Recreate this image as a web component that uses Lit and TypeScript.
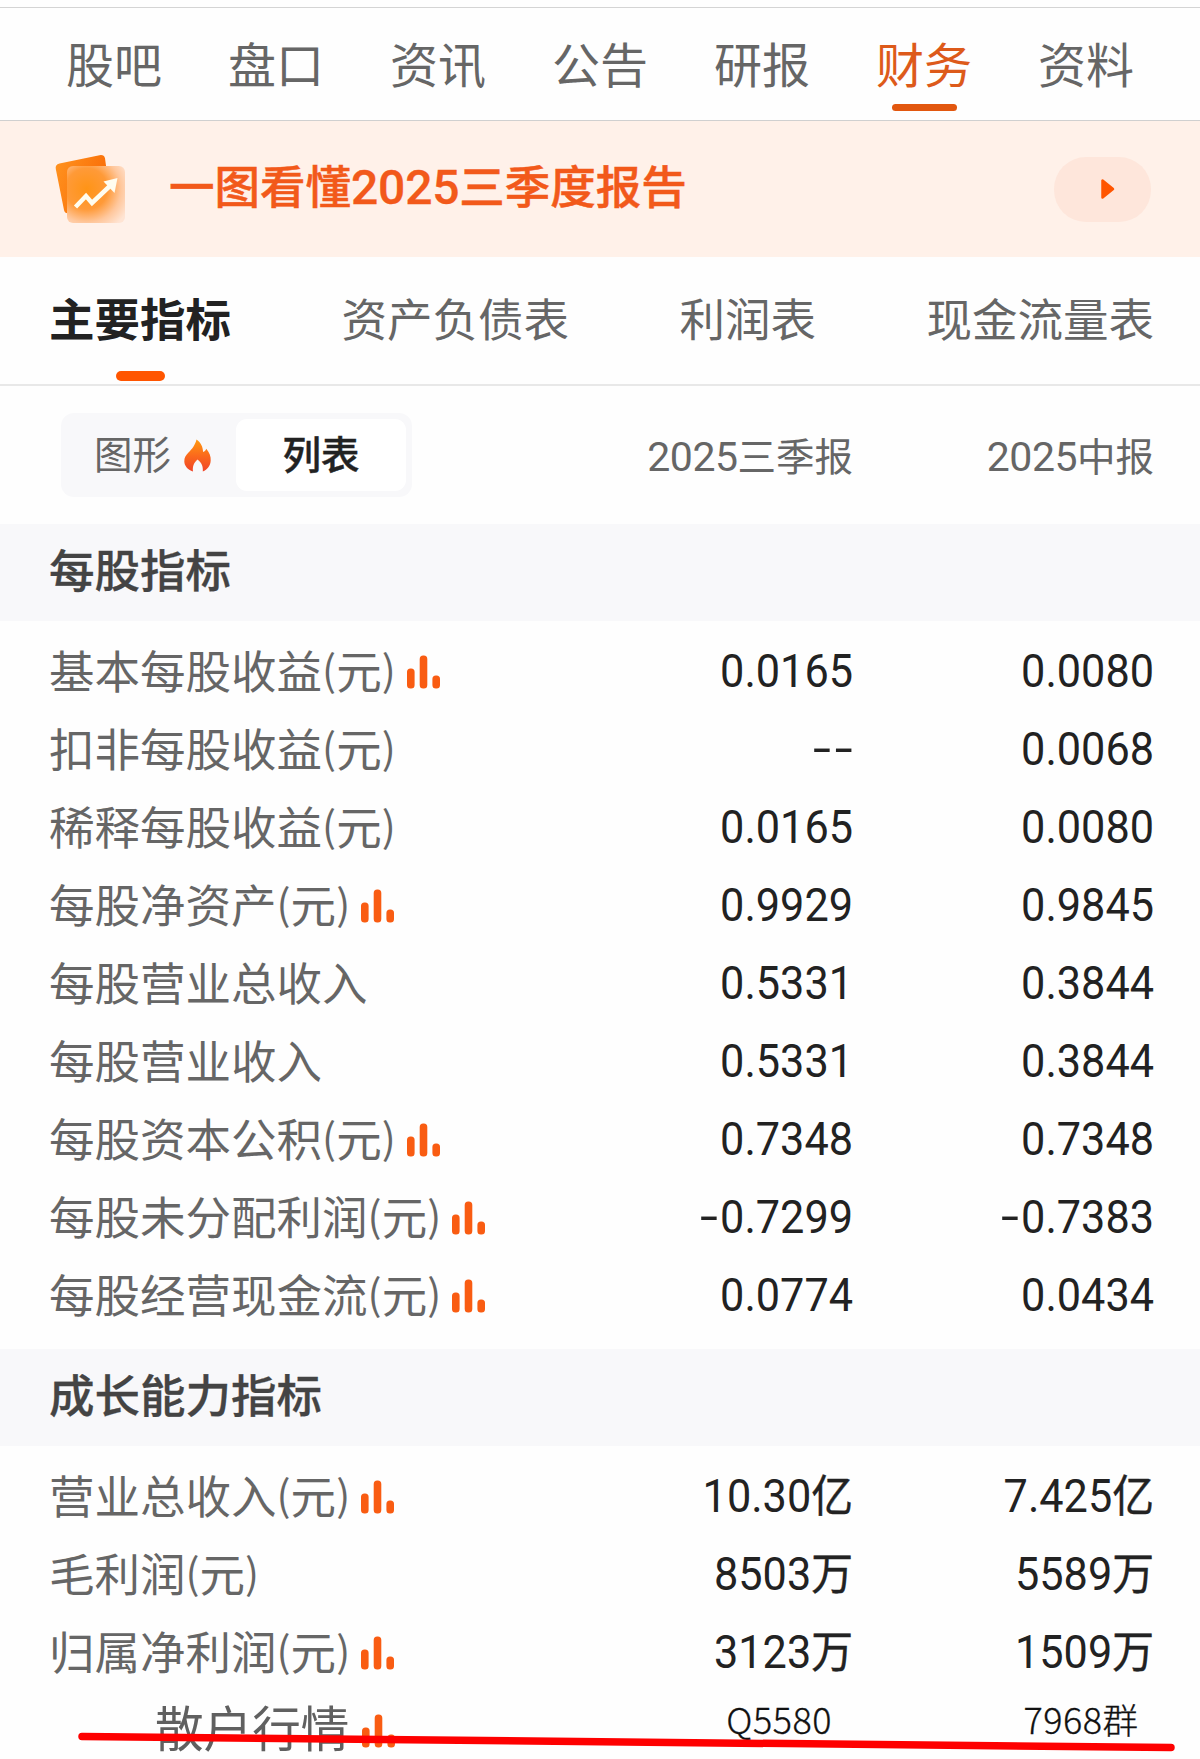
import { LitElement, html, svg, css } from "lit";
import { customElement, property } from "lit/decorators.js";

interface Metric {
  label: string;
  chart?: boolean;
  q3: string;
  h1: string;
}

const NAV = ["股吧", "盘口", "资讯", "公告", "研报", "财务", "资料"];
const TABS = ["主要指标", "资产负债表", "利润表", "现金流量表"];

const PER_SHARE: Metric[] = [
  { label: "基本每股收益(元)", chart: true, q3: "0.0165", h1: "0.0080" },
  { label: "扣非每股收益(元)", q3: "--", h1: "0.0068" },
  { label: "稀释每股收益(元)", q3: "0.0165", h1: "0.0080" },
  { label: "每股净资产(元)", chart: true, q3: "0.9929", h1: "0.9845" },
  { label: "每股营业总收入", q3: "0.5331", h1: "0.3844" },
  { label: "每股营业收入", q3: "0.5331", h1: "0.3844" },
  { label: "每股资本公积(元)", chart: true, q3: "0.7348", h1: "0.7348" },
  { label: "每股未分配利润(元)", chart: true, q3: "-0.7299", h1: "-0.7383" },
  { label: "每股经营现金流(元)", chart: true, q3: "0.0774", h1: "0.0434" },
];

const GROWTH: Metric[] = [
  { label: "营业总收入(元)", chart: true, q3: "10.30亿", h1: "7.425亿" },
  { label: "毛利润(元)", q3: "8503万", h1: "5589万" },
  { label: "归属净利润(元)", chart: true, q3: "3123万", h1: "1509万" },
];

@customElement("bar-icon")
class BarIcon extends LitElement {
  static styles = css`
    :host { display: block; width: 34px; height: 34px; flex: none; }
    svg { display: block; }
  `;
  render() {
    return html`<svg width="34" height="34" viewBox="0 0 34 34" fill="#f95c12">
      ${[[0, 13.5, 20], [12.7, 0.5, 33], [25.4, 20.5, 13]].map(
        ([x, y, h]) => svg`<rect x=${x} y=${y} width="7.6" height=${h} rx="3.5" />`
      )}
    </svg>`;
  }
}

@customElement("metric-row")
class MetricRow extends LitElement {
  @property({ attribute: false }) metric!: Metric;
  static styles = css`
    :host {
      display: grid;
      grid-template-columns: 500px 1fr 301px;
      height: 78px;
      line-height: 74px;
      padding: 0 46px 0 49px;
      box-sizing: border-box;
    }
    .label { display: flex; gap: 11px; font-size: 45.5px; color: #666; white-space: nowrap; }
    .paren { font-size: 41.5px; line-height: 1; vertical-align: 3px; }
    bar-icon { margin-top: 23px; }
    .value {
      font-family: Roboto, "Noto Sans CJK SC", sans-serif;
      font-size: 45.5px;
      text-align: right;
      color: #222;
      line-height: 80px;
      white-space: nowrap;
      transform: scaleX(0.95);
      transform-origin: right;
    }
    .unit { font-family: "Noto Sans CJK SC", sans-serif; font-size: 44px; line-height: 1; -webkit-text-stroke: 0.4px #222; }
    .dash { display: inline-block; transform: scaleX(1.5); margin-right: 6px; position: relative; top: -1px; }
    .dash + .dash { margin-left: 5px; margin-right: 3px; }
  `;
  private label(text: string) {
    return Array.from(text).map((c) => (/[()]/.test(c) ? html`<span class="paren">${c}</span>` : c));
  }
  private value(text: string) {
    return Array.from(text).map((c) =>
      c === "-"
        ? html`<span class="dash">-</span>`
        : /[亿万]/.test(c)
        ? html`<span class="unit">${c}</span>`
        : c
    );
  }
  render() {
    const m = this.metric;
    return html`
      <div class="label"><span>${this.label(m.label)}</span>${m.chart ? html`<bar-icon></bar-icon>` : null}</div>
      <div class="value">${this.value(m.q3)}</div>
      <div class="value">${this.value(m.h1)}</div>
    `;
  }
}

@customElement("app-root")
class AppRoot extends LitElement {
  static styles = css`
    :host {
      display: block;
      position: relative;
      height: 1759px;
      overflow: hidden;
      background: #fefefe;
      font-family: "Noto Sans CJK SC", sans-serif;
      color: #666;
    }
    * { box-sizing: border-box; }
    svg { display: block; }
    .nav {
      display: grid;
      grid-template-columns: repeat(7, 162px);
      justify-content: center;
      margin-top: 7px;
      height: 114px;
      border-top: 1px solid #d4d4d4;
      border-bottom: 1px solid #d0d0d0;
      font-size: 48px;
      line-height: 109px;
      text-align: center;
    }
    .nav .on { color: #dd5a1a; display: flex; flex-direction: column; align-items: center; }
    .nav .on::after { content: ""; width: 65px; height: 7px; border-radius: 4px; background: #e2570f; margin-top: -13px; }
    .banner {
      display: flex;
      align-items: center;
      height: 136px;
      background: #fff1e9;
      padding: 0 49px 0 53px;
    }
    .banner .title {
      margin-left: 40px;
      flex: 1;
      font-size: 45.5px;
      font-weight: 500;
      line-height: 60px;
      margin-top: -11px;
      color: #f2591a;
      -webkit-text-stroke: 0.5px #f2591a;
      white-space: nowrap;
    }
    .banner .year { font-family: Roboto, sans-serif; font-size: 48px; font-weight: 500; line-height: 1; -webkit-text-stroke: 0.3px #f2591a; letter-spacing: -0.2px; }
    .play {
      width: 97px; height: 65px; border-radius: 32px; background: #fee6db;
      display: flex; align-items: center; padding-left: 47px;
    }
    .tabs {
      display: flex;
      justify-content: space-between;
      height: 129px;
      padding: 0 46px 0 49px;
      border-bottom: 2px solid #e8e8e8;
      font-size: 45.5px;
      line-height: 120px;
    }
    .tabs .on { color: #222; font-weight: 700; display: flex; flex-direction: column; align-items: center; }
    .tabs .on::after { content: ""; width: 49px; height: 10px; border-radius: 5px; background: #ff5500; margin-top: -6px; }
    .period {
      display: grid;
      grid-template-columns: 351px 1fr 301px;
      height: 138px;
      padding: 0 46px 0 61px;
      font-size: 38.5px;
    }
    .toggle {
      display: flex; width: 351px; height: 84px; margin-top: 27px; padding: 6px;
      background: #f8f8fa; border-radius: 13px; line-height: 66px;
    }
    .graph { width: 169px; padding-left: 27px; display: flex; gap: 13px; }
    .graph svg { margin-top: 20px; }
    .list { width: 170px; height: 72px; background: #fff; border-radius: 11px; text-align: center; color: #222; font-weight: 500; -webkit-text-stroke: 0.4px #222; }
    .col { text-align: right; line-height: 137px; white-space: nowrap; }
    .col .year { font-family: Roboto, sans-serif; font-size: 41px; line-height: 1; font-weight: 400; letter-spacing: -0.5px; }
    .band {
      height: 97px; background: #f8f8fa; padding-left: 49px;
      font-size: 45.5px; font-weight: 500; line-height: 89px; color: #444;
      -webkit-text-stroke: 0.3px #444;
    }
    .rows { padding: 11px 0 15px; }
    .rows.growth { padding: 11px 0 0; }
    .last {
      display: grid;
      grid-template-columns: 568px 264px 1fr;
      padding: 0 62px 0 0;
      height: 67px;
      align-items: start;
      color: #111;
    }
    .last .name { display: flex; gap: 13px; padding-left: 155px; font-size: 48.6px; line-height: 71px; color: #606060; }
    .last bar-icon { margin-top: 23px; }
    .last .v { text-align: right; font-weight: 300; font-size: 35.5px; line-height: 55px; -webkit-text-stroke: 0.3px #111; }
    .last .code { font-size: 36px; letter-spacing: 0.5px; }
    .strike { position: absolute; left: 0; top: 1725px; }
  `;

  private document() {
    return html`<svg width="76" height="76" viewBox="0 0 76 76">
      <defs>
        <linearGradient id="back" x1="0" y1="0" x2="1" y2="0.4">
          <stop offset="0" stop-color="#ff9420" /><stop offset="1" stop-color="#f96a05" />
        </linearGradient>
        <radialGradient id="front" cx="0.34" cy="0.4" r="0.8">
          <stop offset="0" stop-color="#ff9416" /><stop offset="0.45" stop-color="#ff9a38" />
          <stop offset="0.74" stop-color="#ffc79c" /><stop offset="1" stop-color="#ffe4d3" />
        </radialGradient>
      </defs>
      <path d="M6.500 12.500 46.500 4.200q4.500-.8 5.500 3L58 52 16 62Q12 63 11 59L2.800 18q-.9-4.500 3.700-5.500z" fill="url(#back)" />
      <rect x="14" y="15" width="58" height="57" rx="6" fill="url(#front)" />
      <path d="M22.500 56 33 45l6 7L59 33" fill="none" stroke="#fffdf0" stroke-width="4.500" />
      <path d="M64.500 27 61.500 42 50.500 30.500z" fill="#fffdf0" />
    </svg>`;
  }

  private flame() {
    return html`<svg width="27" height="33" viewBox="0 0 27 33">
      <defs>
        <linearGradient id="fire" x1="0" y1="0" x2="0" y2="1">
          <stop offset="0" stop-color="#ff9a10" /><stop offset="0.5" stop-color="#fb6a1c" /><stop offset="1" stop-color="#f04428" />
        </linearGradient>
      </defs>
      <path fill="url(#fire)" d="M12.500.5c4.500 3 6.300 7.300 6.600 12.500 1.700-.5 2.700-1.700 3.200-3.300C25.500 13.500 27 17.500 26.700 21.500c-.3 5.300-3.200 9.200-7.900 11 .5-5-1.200-8.900-5.300-12-3.500 3-5.200 7-4.500 12C3.500 30.500.5 27 .3 22.500.1 18.500 2 16 4.500 13.500 8 10 11 6.500 12.500.5z" />
    </svg>`;
  }

  render() {
    return html`
      <nav class="nav">${NAV.map((n) => html`<div class=${n === "财务" ? "on" : ""}>${n}</div>`)}</nav>
      <div class="banner">
        ${this.document()}
        <div class="title">一图看懂<span class="year">2025</span>三季度报告</div>
        <div class="play">
          <svg width="14" height="22" viewBox="0 0 14 22"><path d="M1.500 2.500v17L12 11z" fill="#ff5500" stroke="#ff5500" stroke-width="2.500" stroke-linejoin="round" /></svg>
        </div>
      </div>
      <div class="tabs">${TABS.map((t, i) => html`<div class=${i === 0 ? "on" : ""}>${t}</div>`)}</div>
      <div class="period">
        <div class="toggle">
          <div class="graph"><span>图形</span>${this.flame()}</div>
          <div class="list">列表</div>
        </div>
        <div class="col"><span class="year">2025</span>三季报</div>
        <div class="col"><span class="year">2025</span>中报</div>
      </div>
      <div class="band">每股指标</div>
      <div class="rows">${PER_SHARE.map((m) => html`<metric-row .metric=${m}></metric-row>`)}</div>
      <div class="band">成长能力指标</div>
      <div class="rows growth">${GROWTH.map((m) => html`<metric-row .metric=${m}></metric-row>`)}</div>
      <div class="last">
        <div class="name"><span>散户行情</span><bar-icon></bar-icon></div>
        <div class="v"><span class="code">Q5580</span></div>
        <div class="v"><span class="code">7968</span>群</div>
      </div>
      <svg class="strike" width="1200" height="34" viewBox="0 0 1200 34">
        <path d="M82 11.500 1171 22.500" stroke="#fe0000" stroke-width="7.500" stroke-linecap="round" />
      </svg>
    `;
  }
}
